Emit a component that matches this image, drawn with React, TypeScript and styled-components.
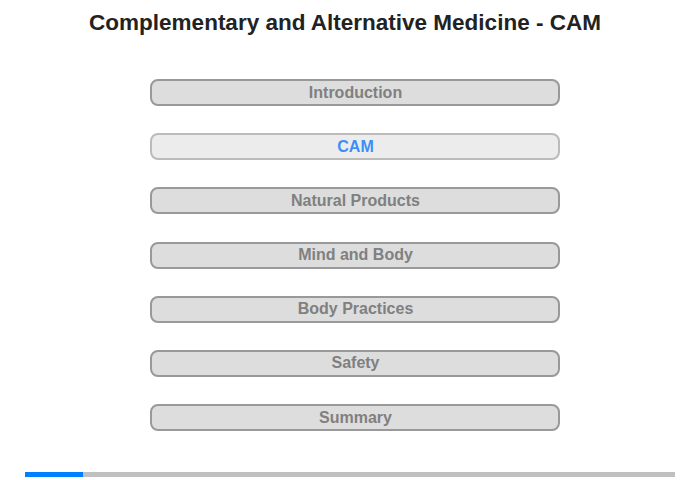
import React from 'react';
import styled, { createGlobalStyle } from 'styled-components';

const GlobalStyle = createGlobalStyle`
  html, body {
    margin: 0;
    padding: 0;
    background: #fff;
    font-family: "Liberation Sans", Arial, sans-serif;
  }
`;

const Page = styled.div`
  width: 700px;
  height: 480px;
  display: flex;
  flex-direction: column;
  align-items: center;
  box-sizing: border-box;
`;

const Title = styled.h1`
  margin: 9px 10px 0 0;
  height: 27px;
  font-size: 22.5px;
  line-height: 27px;
  font-weight: bold;
  color: #222;
`;

const Menu = styled.nav`
  margin-top: 43px;
  margin-left: 9px;
  display: flex;
  flex-direction: column;
  gap: 27.2px;
`;

const MenuButton = styled.div<{ $active?: boolean }>`
  width: 410px;
  height: 27px;
  box-sizing: border-box;
  padding-left: 2px;
  border: 2px solid ${(p) => (p.$active ? '#bbb' : '#999')};
  border-radius: 8px;
  background: ${(p) => (p.$active ? '#ececec' : '#ddd')};
  color: ${(p) => (p.$active ? '#3d8ff8' : '#808080')};
  font-size: 16px;
  font-weight: bold;
  display: flex;
  align-items: center;
  justify-content: center;
`;

const Progress = styled.div`
  margin-top: auto;
  margin-bottom: 3px;
  width: 650px;
  height: 5px;
  background: #c0c0c0;
  display: flex;
`;

const ProgressFill = styled.div`
  height: 100%;
  background: #0080ff;
`;

const items = [
  'Introduction',
  'CAM',
  'Natural Products',
  'Mind and Body',
  'Body Practices',
  'Safety',
  'Summary',
];

export default function App() {
  const active = 1;
  return (
    <>
      <GlobalStyle />
      <Page>
        <Title>Complementary and Alternative Medicine - CAM</Title>
        <Menu>
          {items.map((label, i) => (
            <MenuButton key={label} $active={i === active}>
              {label}
            </MenuButton>
          ))}
        </Menu>
        <Progress>
          <ProgressFill style={{ width: `${(58 / 650) * 100}%` }} />
        </Progress>
      </Page>
    </>
  );
}
